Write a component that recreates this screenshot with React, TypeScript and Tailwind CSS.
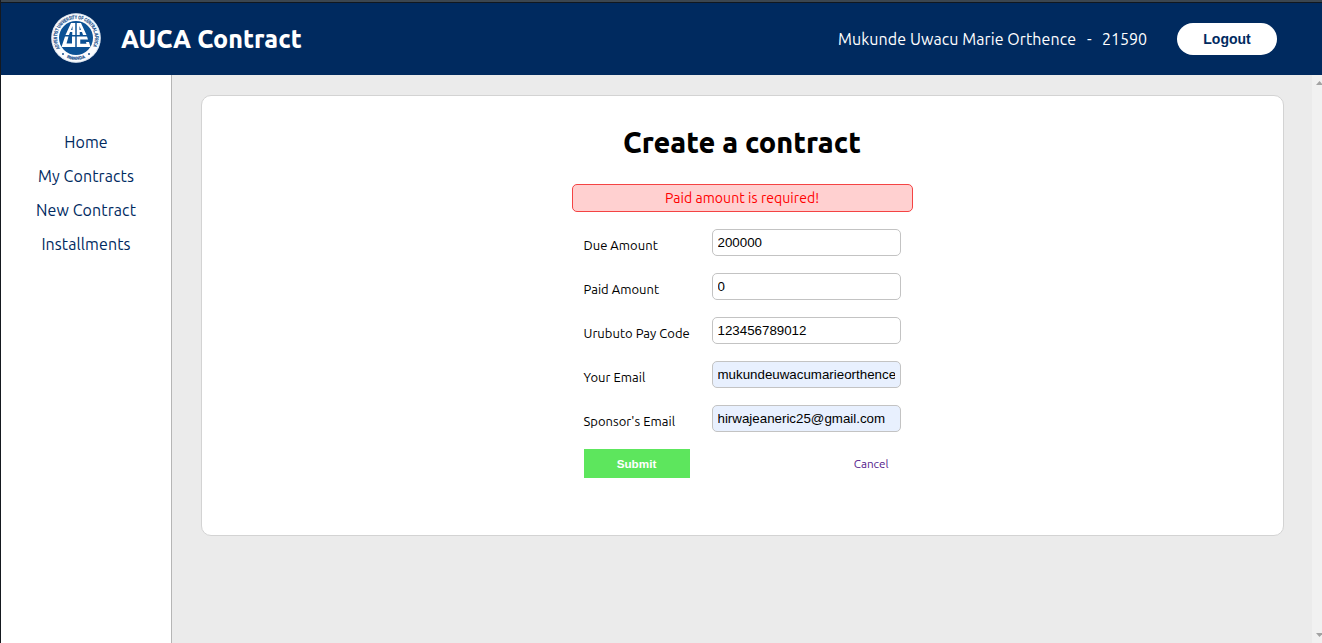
const links = ["Home", "My Contracts", "New Contract", "Installments"];

const fields = [
  { label: "Due Amount", value: "200000", filled: false },
  { label: "Paid Amount", value: "0", filled: false },
  { label: "Urubuto Pay Code", value: "123456789012", filled: false },
  { label: "Your Email", value: "mukundeuwacumarieorthence@gmail.com", filled: true },
  { label: "Sponsor's Email", value: "hirwajeaneric25@gmail.com", filled: true },
];

function Logo() {
  return (
    <svg viewBox="0 0 100 100" className="mb-[2px] h-[50px] w-[50px] shrink-0" aria-label="AUCA">
      <defs>
        <path id="ringTop" d="M19.2 72.2 A38 38 0 1 1 80.8 72.2" />
        <path id="ringBottom" d="M18 80 A44.5 44.5 0 0 0 82 80" />
      </defs>
      <circle cx="50" cy="50" r="49.5" fill="#fbfcfe" />
      <circle cx="50" cy="50" r="48.5" fill="none" stroke="#b4c8de" strokeWidth="1" />
      <circle cx="50" cy="50" r="34" fill="#0b5194" />
      <text fill="#174f8c" stroke="#174f8c" strokeWidth="0.4" fontSize="10" fontWeight="700" fontFamily="Liberation Sans, sans-serif">
        <textPath href="#ringTop" startOffset="2" textLength="158" lengthAdjust="spacingAndGlyphs">ADVENTIST UNIVERSITY OF CENTRAL AFRICA</textPath>
      </text>
      <text fill="#174f8c" stroke="#174f8c" strokeWidth="0.4" fontSize="8.5" fontWeight="700" fontFamily="Liberation Sans, sans-serif" textAnchor="middle">
        <textPath href="#ringBottom" startOffset="50%">RWANDA</textPath>
      </text>
      <circle cx="24" cy="82" r="2" fill="#174f8c" />
      <circle cx="76" cy="82" r="2" fill="#174f8c" />
      <g fill="#fff">
        <path d="M40 20H48.5V44H42.5V38H38L36 44H29ZM43 26L40 34H43Z" fillRule="evenodd" />
        <path d="M51.5 20H60L71 44H64L62 38H57.5V44H51.5ZM57 26V34H60Z" fillRule="evenodd" />
        <path d="M28 47H35L31 61H42V47H48.5V68H21Z" />
        <path d="M51.5 47H72L74 53H58.5V61.5H71L70 58H76L79 68H51.5Z" />
      </g>
    </svg>
  );
}

export default function App() {
  return (
    <div className="flex h-[643px] w-full flex-col overflow-hidden border-l border-[#15191f] bg-[#ebebeb] font-['Ubuntu','Noto_Sans',sans-serif] text-black">
      <div className="h-[3px] shrink-0 border-b border-[#111820] bg-[#3b4650]" />
      <header className="flex h-[72px] shrink-0 items-center justify-between bg-[#002a5f] pl-[50px] pr-[45px] text-white">
        <div className="flex items-center gap-5">
          <Logo />
          <h1 className="whitespace-nowrap text-[25px] font-extrabold leading-8">AUCA Contract</h1>
        </div>
        <div className="flex items-center">
          <div className="flex whitespace-pre text-base">
            <span className="w-[249px] tracking-[0.085px]">Mukunde Uwacu Marie Orthence</span>
            <span className="w-[15px]">-</span>
            <span className="w-[75px]">21590</span>
          </div>
          <button className="h-8 w-[100px] rounded-full bg-white font-['Liberation_Sans',sans-serif] text-sm font-bold text-[#002a5f]">
            Logout
          </button>
        </div>
      </header>
      <div className="flex min-h-0 flex-1">
        <nav className="flex w-[171px] shrink-0 flex-col items-center gap-[10px] border-r border-[#b5b5b5] bg-white pt-[55px] text-base text-[#002a5f]">
          {links.map((l) => (
            <a key={l} className="whitespace-nowrap leading-6 tracking-[0.1px]">
              {l}
            </a>
          ))}
        </nav>
        <main className="min-w-0 flex-1 pl-[29px] pr-7 pt-5">
          <section className="flex h-[441px] flex-col items-center rounded-[10px] border border-[#d3d3d3] bg-white">
            <h2 className="mt-[26px] whitespace-nowrap pr-px text-[28.8px] font-extrabold leading-10">Create a contract</h2>
            <div className="mt-[22px] h-7 w-[341px] rounded-[5px] border border-[#f44343] bg-[#ffd0d0] pr-px text-center text-sm leading-[26px] tracking-[0.06px] text-[#ff0000]">
              Paid amount is required!
            </div>
            <form className="mt-[17px] flex w-[318px] flex-col gap-[17px]">
              {fields.map((f) => (
                <div key={f.label} className="flex h-[27px] items-start">
                  <label className="w-32 whitespace-nowrap pt-[7px] text-[13px] leading-[18px] tracking-[0.03px]">{f.label}</label>
                  <input
                    readOnly
                    type="text"
                    value={f.value}
                    className={
                      "h-[27px] w-[189px] rounded-[5px] border border-[#c3c3c3] px-[5px] font-['Liberation_Sans',sans-serif] text-[13.333px] outline-none " +
                      (f.filled ? "bg-[#e8f0fe]" : "bg-white")
                    }
                  />
                </div>
              ))}
              <div className="flex items-center justify-between pr-[13px]">
                <button type="button" className="h-[29px] w-[106px] bg-[#5de65d] pt-px font-['Liberation_Sans',sans-serif] text-[11.7px] font-bold text-white">
                  Submit
                </button>
                <a className="pt-px text-[11.7px] text-[#551a8b]">Cancel</a>
              </div>
            </form>
          </section>
        </main>
        <div className="flex w-[10px] shrink-0 flex-col items-end justify-between overflow-hidden bg-[#f1f1f1] pb-[6px] pt-[6px]">
          <svg viewBox="0 0 6 4" className="h-1 w-[6px]">
            <path d="M0 4L3.5 0L7 4Z" fill="#a3a3a3" />
          </svg>
          <svg viewBox="0 0 6 4" className="h-1 w-[6px]">
            <path d="M0 0L3.5 4L7 0Z" fill="#a3a3a3" />
          </svg>
        </div>
      </div>
    </div>
  );
}
